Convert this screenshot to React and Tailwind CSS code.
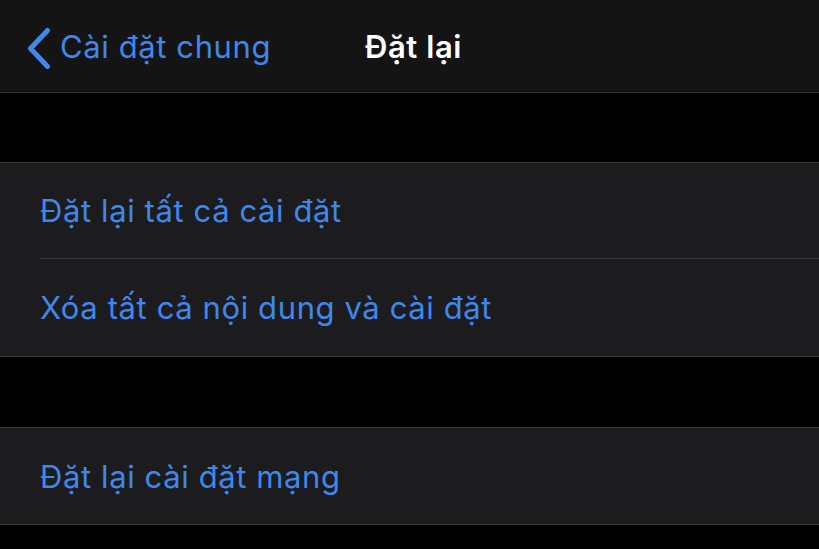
export default function App() {
  const font = { fontFamily: 'Inter, "Noto Sans", sans-serif' };
  return (
    <div className="min-h-[549px] w-full bg-black text-[#3f87ea]" style={font}>
      <header className="grid h-[93px] grid-cols-[1fr_auto_1fr] items-center border-b border-[#2c2c2e] bg-[#141414]">
        <button className="flex items-center gap-[9px] pl-[26px] text-[31px] tracking-[0.6px] text-[#3f87ea]">
          <svg width="25" height="42" viewBox="0 0 25 42" fill="none" aria-hidden="true" className="mt-[3px]">
            <path d="M21.5 3.5L4.5 21.5l17 18" stroke="currentColor" strokeWidth="5" strokeLinecap="round" strokeLinejoin="round" />
          </svg>
          <span className="mt-[3px]">Cài đặt chung</span>
        </button>
        <h1 className="mt-[3px] pl-[8px] text-[31px] font-semibold tracking-[0.6px] text-white">Đặt lại</h1>
        <div />
      </header>

      <div className="h-[69px]" />

      <section className="border-y border-[#38383a] bg-[#1c1c1e] text-[31px] tracking-[0.6px]">
        <div className="ml-[40px] flex h-[96px] items-center border-b border-[#38383a] pt-[2px]">
          Đặt lại tất cả cài đặt
        </div>
        <div className="flex h-[97px] items-center pl-[40px] pt-[2px]">Xóa tất cả nội dung và cài đặt</div>
      </section>

      <div className="h-[70px]" />

      <section className="border-y border-[#38383a] bg-[#1c1c1e] text-[31px] tracking-[0.6px]">
        <div className="flex h-[96px] items-center pl-[40px] pt-[2px]">Đặt lại cài đặt mạng</div>
      </section>
    </div>
  );
}
